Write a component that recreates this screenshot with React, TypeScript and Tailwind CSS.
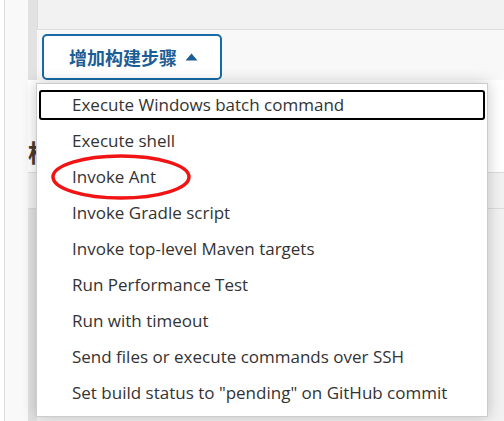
import React from "react";

const items = [
  "Execute Windows batch command",
  "Execute shell",
  "Invoke Ant",
  "Invoke Gradle script",
  "Invoke top-level Maven targets",
  "Run Performance Test",
  "Run with timeout",
  "Send files or execute commands over SSH",
  'Set build status to "pending" on GitHub commit',
];

const App = () => {
  return (
    <div className="relative w-[504px] h-[421px] overflow-hidden bg-white font-['Open_Sans',sans-serif]">
      <div className="flex h-full">
        <div className="w-[4px] bg-white" />
        <div className="w-[24px] border-l border-[#dcdcdc] bg-[#f9f9f9]" />
        <div className="flex-1 flex flex-col">
          {/* build steps section */}
          <div className="flex h-[80px]">
            <div className="w-[9px] bg-[#e2e2e2]" />
            <div className="flex-1 flex flex-col bg-[#f8f8f8]">
              <div className="h-[31px] bg-[#f2f2f2] border-l border-b border-[#dcdcdc]" />
              <div className="pl-[5px] pt-[4px]">
                <button className="flex items-center gap-[8px] h-[46px] w-[180px] pl-[25px] rounded-[5px] border-2 border-[#176aa5] bg-white">
                  <span className="text-[18px] font-bold text-[#1b5d95] font-['Noto_Sans_CJK_SC',sans-serif] leading-none">
                    增加构建步骤
                  </span>
                  <svg width="13" height="8" viewBox="0 0 13 8">
                    <path d="M6.5 0.5 L12.5 7.5 L0.5 7.5 Z" fill="#1b5d95" />
                  </svg>
                </button>
              </div>
            </div>
          </div>
          {/* post build heading, covered by the menu */}
          <div className="h-[93px] flex items-end pb-[3px] border-b border-[#dcdcdc] bg-white">
            <span className="text-[24px] leading-[34px] font-bold text-[#4b3b30] font-['Noto_Sans_CJK_SC',sans-serif]">
              构建后操作
            </span>
          </div>
          <div className="h-[36px] border-b border-[#dcdcdc] bg-[#f2f2f2]" />
          <div className="flex flex-1">
            <div className="w-[9px] bg-[#e2e2e2]" />
            <div className="flex-1 bg-[#f2f2f2]" />
          </div>
        </div>
      </div>

      {/* dropdown menu */}
      <div className="absolute left-[36px] top-[83px] w-[452px] h-[334px] bg-white border border-[#cccccc] shadow-[0_0_14px_rgba(0,0,0,0.22)] pt-[6px] px-[2px] flex flex-col gap-[6px]">
        {items.map((label, i) => (
          <div
            key={label}
            className={
              "h-[30px] flex items-center pl-[31px] rounded-[3px] border-2 text-[17px] text-[#333333] " +
              (i === 0 ? "border-black" : "border-transparent")
            }
          >
            {label}
          </div>
        ))}
      </div>

      {/* annotation */}
      <svg className="absolute left-[50px] top-[153px]" width="144" height="48" viewBox="0 0 144 48">
        <ellipse cx="71" cy="24" rx="68" ry="21" fill="none" stroke="#f01414" strokeWidth="3.5" />
      </svg>
    </div>
  );
};

export default App;
